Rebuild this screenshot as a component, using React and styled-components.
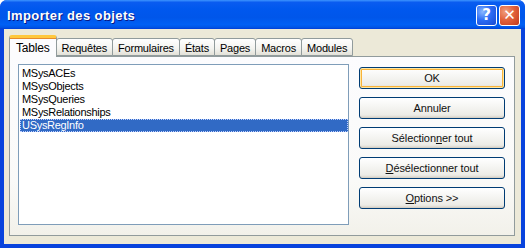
import React from "react"
import styled, { createGlobalStyle } from "styled-components"

const GlobalStyle = createGlobalStyle`
  html, body {
    margin: 0;
    padding: 0;
    background: #ffffff;
  }
  body {
    font-family: "Liberation Sans", Arial, sans-serif;
    font-size: 11px;
  }
`

const Window = styled.div`
  width: 525px;
  height: 248px;
  display: flex;
  flex-direction: column;
  background: #0843dd;
  border-radius: 7px 7px 0 0;
  box-sizing: border-box;
  overflow: hidden;
`

const TitleBar = styled.div`
  height: 29px;
  flex-shrink: 0;
  display: flex;
  align-items: center;
  justify-content: space-between;
  padding: 0 5px 0 7px;
  background: linear-gradient(
    to bottom,
    #3d95ff 0%,
    #0a5cf0 8%,
    #0058ee 30%,
    #0056ea 60%,
    #0060f5 85%,
    #0055e6 94%,
    #003dd7 100%
  );
`

const Title = styled.span`
  color: #ffffff;
  font-family: "Liberation Sans", Arial, sans-serif;
  font-weight: bold;
  font-size: 13px;
  letter-spacing: 0.4px;
  text-shadow: 1px 1px 0 #0a1883;
  padding-top: 1px;
`

const Controls = styled.div`
  display: flex;
  gap: 2px;
  margin-top: 1px;
`

const CtlButton = styled.div`
  width: 21px;
  height: 21px;
  box-sizing: border-box;
  border: 1px solid #ffffff;
  border-radius: 3px;
  display: flex;
  align-items: center;
  justify-content: center;
  color: #ffffff;
  font-family: "DejaVu Sans", sans-serif;
  font-weight: bold;
  font-size: 15px;
  line-height: 1;
  background: ${(p) =>
    p.$close
      ? "radial-gradient(circle at 30% 30%, #f0a080 0%, #e2623c 45%, #c2381c 100%)"
      : "radial-gradient(circle at 30% 30%, #8ab8ff 0%, #2c6cf5 45%, #1848d0 100%)"};
`

const Client = styled.div`
  flex: 1;
  margin: 0 4px 4px 4px;
  background: #ece9d8;
  padding: 5px 6px 8px 5px;
  display: flex;
  flex-direction: column;
`

const TabRow = styled.div`
  display: flex;
  align-items: flex-end;
  height: 22px;
  position: relative;
  z-index: 1;
`

const Tab = styled.div`
  box-sizing: border-box;
  height: ${(p) => (p.$active ? "22px" : "18px")};
  padding: 0 ${(p) => (p.$active ? "6px" : "5px")};
  margin-right: -1px;
  display: flex;
  align-items: center;
  justify-content: center;
  border: 1px solid #919b9c;
  border-bottom: ${(p) => (p.$active ? "none" : "1px solid #919b9c")};
  border-top: ${(p) => (p.$active ? "3px solid #ffc83c" : "1px solid #919b9c")};
  border-radius: 3px 3px 0 0;
  background: ${(p) =>
    p.$active ? "#fcfcfe" : "linear-gradient(to bottom, #ffffff 0%, #f3f3ef 60%, #e3e1d8 100%)"};
  color: #000000;
  letter-spacing: -0.2px;
  padding-top: ${(p) => (p.$active ? "0" : "1px")};
  margin-bottom: ${(p) => (p.$active ? "-1px" : "0")};
  box-shadow: ${(p) => (p.$active ? "inset 0 1px 0 #e68b2c" : "none")};
  font-size: ${(p) => (p.$active ? "12px" : "11px")};
`

const Panel = styled.div`
  flex: 1;
  display: flex;
  gap: 10px;
  padding: 7px 9px 10px 8px;
  border: 1px solid #919b9c;
  background: linear-gradient(to bottom, #fcfcfe 0%, #fafaf8 70%, #f2f1ea 100%);
`

const ListBox = styled.div`
  width: 328px;
  border: 1px solid #7f9db9;
  background: #ffffff;
  padding: 2px 0 0 1px;
  display: flex;
  flex-direction: column;
`

const Item = styled.div`
  height: 13px;
  line-height: 13px;
  padding-left: 2px;
  font-size: 11px;
  letter-spacing: -0.3px;
  color: ${(p) => (p.$selected ? "#ffffff" : "#000000")};
  background: ${(p) => (p.$selected ? "#316ac5" : "transparent")};
  outline: ${(p) => (p.$selected ? "1px dotted #c0d0ff" : "none")};
  outline-offset: -1px;
`

const ButtonColumn = styled.div`
  flex: 1;
  display: flex;
  flex-direction: column;
  gap: 8px;
  padding-top: 3px;
`

const Button = styled.div`
  height: 22px;
  box-sizing: border-box;
  border: 1px solid #003c74;
  border-radius: 3px;
  display: flex;
  align-items: center;
  justify-content: center;
  font-size: 11px;
  letter-spacing: -0.1px;
  color: #111111;
  background: linear-gradient(to bottom, #ffffff 0%, #f6f6f3 40%, #ecebe6 85%, #d6d0c5 100%);
  box-shadow: ${(p) =>
    p.$default
      ? "inset 0 0 0 1px #ffe7a2, inset 0 0 0 2px #f8b33a"
      : "inset 0 -1px 0 #d6d0c5"};
`

const Key = styled.span`
  text-decoration: underline;
`

const tabs = ["Tables", "Requêtes", "Formulaires", "États", "Pages", "Macros", "Modules"]
const items = ["MSysACEs", "MSysObjects", "MSysQueries", "MSysRelationships", "USysRegInfo"]

export default function App() {
  return (
    <>
      <GlobalStyle />
      <Window>
        <TitleBar>
          <Title>Importer des objets</Title>
          <Controls>
            <CtlButton>?</CtlButton>
            <CtlButton $close>✕</CtlButton>
          </Controls>
        </TitleBar>
        <Client>
          <TabRow>
            {tabs.map((t, i) => (
              <Tab key={t} $active={i === 0}>
                {t}
              </Tab>
            ))}
          </TabRow>
          <Panel>
            <ListBox>
              {items.map((it) => (
                <Item key={it} $selected={it === "USysRegInfo"}>
                  {it}
                </Item>
              ))}
            </ListBox>
            <ButtonColumn>
              <Button $default>OK</Button>
              <Button>Annuler</Button>
              <Button>
                Sélection<Key>n</Key>er tout
              </Button>
              <Button>
                <Key>D</Key>ésélectionner tout
              </Button>
              <Button>
                <Key>O</Key>ptions &gt;&gt;
              </Button>
            </ButtonColumn>
          </Panel>
        </Client>
      </Window>
    </>
  )
}
